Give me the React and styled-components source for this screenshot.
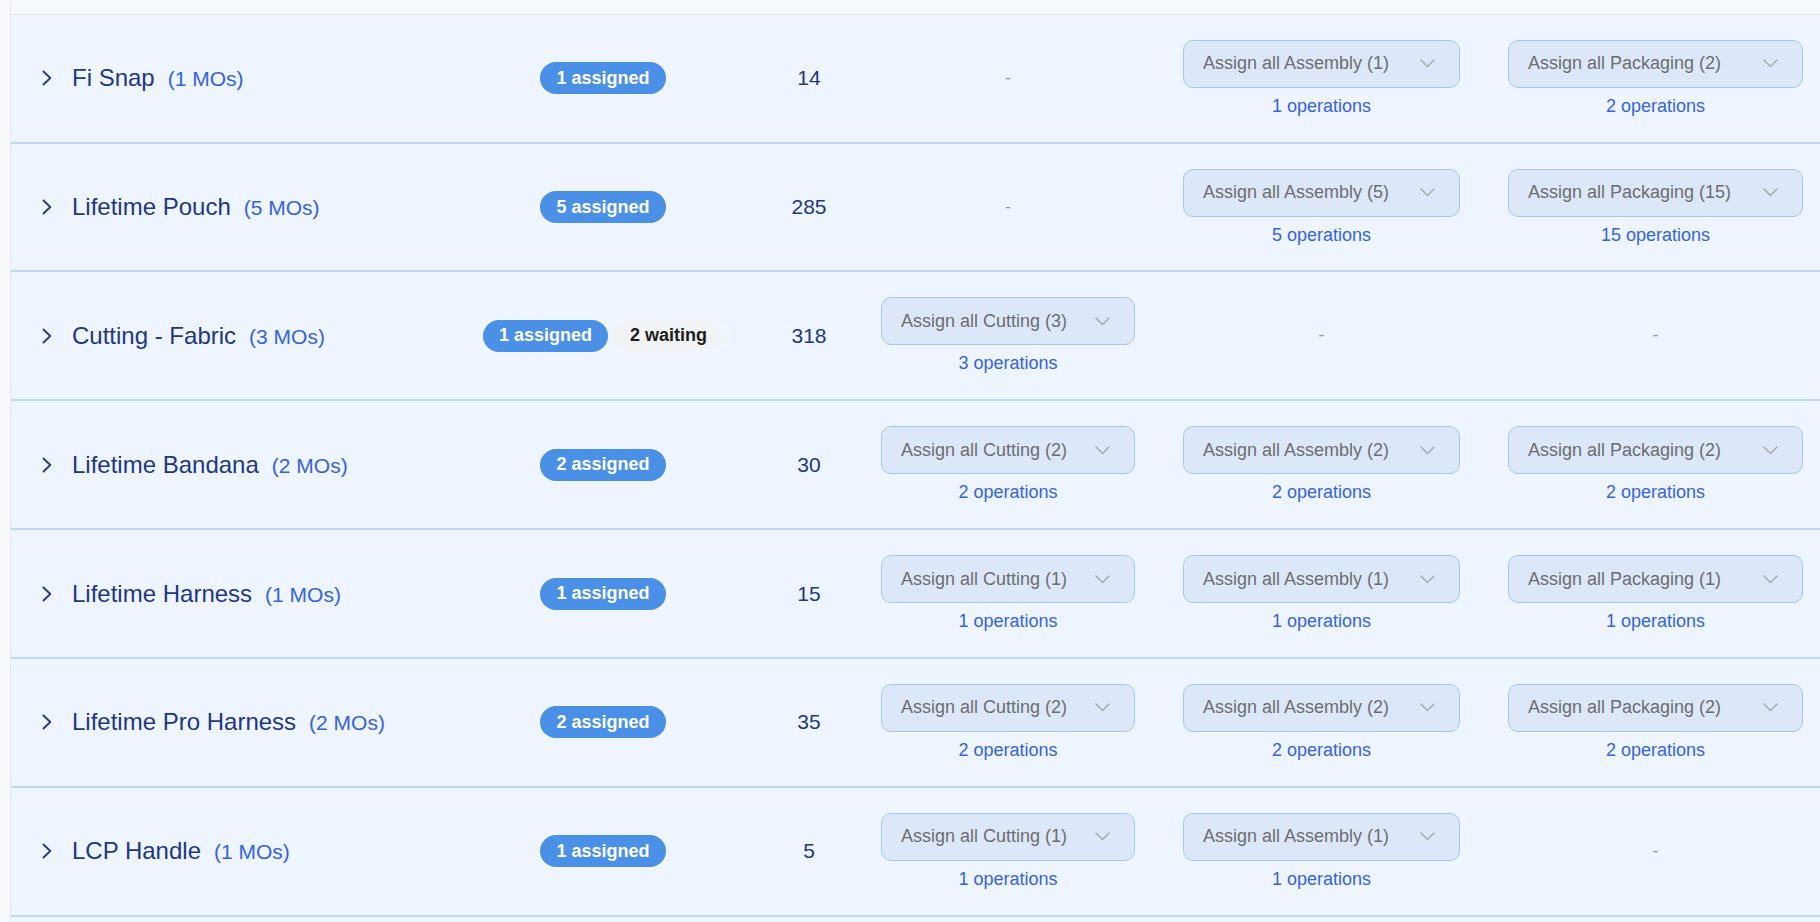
import React from "react";
import styled, { createGlobalStyle } from "styled-components";

const Global = createGlobalStyle`
  html, body { margin: 0; padding: 0; }
  body {
    background: #f7f9fc;
    font-family: "Liberation Sans", Arial, Helvetica, sans-serif;
    overflow: hidden;
  }
`;

const Page = styled.div`
  display: flex;
  height: 100vh;
  overflow: hidden;
`;

const Gutter = styled.div`
  width: 10px;
  flex: 0 0 10px;
  background: #f7f9fc;
  border-right: 1px solid #e6e9ee;
  box-shadow: 1px 0 2px rgba(0, 0, 0, 0.03);
`;

const Main = styled.div`
  flex: 1;
  display: flex;
  flex-direction: column;
`;

const TopStrip = styled.div`
  height: 13.8px;
  flex: 0 0 auto;
  background: #f7f9fc;
  border-bottom: 1px solid #e1e4e9;
`;

const List = styled.div`
  flex: 1;
  background: #eef5fe;
`;

const Row = styled.div`
  display: grid;
  grid-template-columns: 441px 302px 110px 288px 339px 329px;
  height: 126.83px;
  border-bottom: 2px solid #bfd7f8;
  background: #eef5fe;
  align-items: center;
`;

const NameCell = styled.div`
  display: flex;
  align-items: center;
  padding-left: 31px;
  gap: 20px;
`;

const Name = styled.span`
  font-size: 24px;
  color: #1f3787;
  white-space: nowrap;
`;

const Mos = styled.span`
  font-size: 21px;
  color: #3563e3;
  margin-left: 13px;
  white-space: nowrap;
`;

const Center = styled.div`
  display: flex;
  justify-content: center;
  align-items: center;
  gap: 6px;
`;

const Badge = styled.span`
  display: inline-flex;
  align-items: center;
  height: 32px;
  padding: 0 16px;
  border-radius: 16px;
  font-size: 18px;
  font-weight: 700;
  white-space: nowrap;
  background: ${(p) => (p.$variant === "waiting" ? "#f2f3f4" : "#4a90e6")};
  color: ${(p) => (p.$variant === "waiting" ? "#1c1c1c" : "#ffffff")};
`;

const Count = styled.span`
  font-size: 21px;
  color: #1f3787;
`;

const OpCell = styled.div`
  display: flex;
  flex-direction: column;
  align-items: center;
  gap: 7px;
`;

const Dropdown = styled.button`
  box-sizing: border-box;
  width: ${(p) => p.$w}px;
  height: 48px;
  display: flex;
  align-items: center;
  justify-content: space-between;
  padding: 0 24px 0 19px;
  background: #dce8fa;
  border: 1.5px solid #a4c6f5;
  border-radius: 10px;
  font-family: inherit;
  font-size: 18px;
  color: #6d6d6d;
  cursor: pointer;
  white-space: nowrap;
`;

const Ops = styled.span`
  font-size: 18px;
  line-height: 22px;
  color: #3563e6;
`;

const Dash = styled.span`
  font-size: 18px;
  color: #9b9b9b;
`;

const Chevron = () => (
  <svg width="10" height="16" viewBox="0 0 10 16" fill="none">
    <path d="M1.5 1.5 L8.3 8 L1.5 14.5" stroke="#2b3a80" strokeWidth="1.9" strokeLinecap="round" strokeLinejoin="round" />
  </svg>
);

const Caret = () => (
  <svg width="15" height="9" viewBox="0 0 15 9" fill="none">
    <path d="M1 1 L7.5 7.5 L14 1" stroke="#a9a9a9" strokeWidth="1.5" strokeLinecap="round" strokeLinejoin="round" />
  </svg>
);

const WIDTHS = { Cutting: 254, Assembly: 277, Packaging: 295 };

const OpColumn = ({ kind, n }) =>
  n ? (
    <OpCell>
      <Dropdown $w={WIDTHS[kind]}>
        <span>{`Assign all ${kind} (${n})`}</span>
        <Caret />
      </Dropdown>
      <Ops>{n} operations</Ops>
    </OpCell>
  ) : (
    <Center>
      <Dash>-</Dash>
    </Center>
  );

const rows = [
  { name: "Fi Snap", mos: 1, assigned: 1, count: 14, cut: 0, asm: 1, pack: 2 },
  { name: "Lifetime Pouch", mos: 5, assigned: 5, count: 285, cut: 0, asm: 5, pack: 15 },
  { name: "Cutting - Fabric", mos: 3, assigned: 1, waiting: 2, count: 318, cut: 3, asm: 0, pack: 0 },
  { name: "Lifetime Bandana", mos: 2, assigned: 2, count: 30, cut: 2, asm: 2, pack: 2 },
  { name: "Lifetime Harness", mos: 1, assigned: 1, count: 15, cut: 1, asm: 1, pack: 1 },
  { name: "Lifetime Pro Harness", mos: 2, assigned: 2, count: 35, cut: 2, asm: 2, pack: 2 },
  { name: "LCP Handle", mos: 1, assigned: 1, count: 5, cut: 1, asm: 1, pack: 0 },
];

export default function App() {
  return (
    <>
      <Global />
      <Page>
        <Gutter />
        <Main>
          <TopStrip />
          <List>
            {rows.map((r) => (
              <Row key={r.name}>
                <NameCell>
                  <Chevron />
                  <span>
                    <Name>{r.name}</Name>
                    <Mos>({r.mos} MOs)</Mos>
                  </span>
                </NameCell>
                <Center>
                  <Badge>{r.assigned} assigned</Badge>
                  {r.waiting ? <Badge $variant="waiting">{r.waiting} waiting</Badge> : null}
                </Center>
                <Center>
                  <Count>{r.count}</Count>
                </Center>
                <OpColumn kind="Cutting" n={r.cut} />
                <OpColumn kind="Assembly" n={r.asm} />
                <OpColumn kind="Packaging" n={r.pack} />
              </Row>
            ))}
          </List>
        </Main>
      </Page>
    </>
  );
}
